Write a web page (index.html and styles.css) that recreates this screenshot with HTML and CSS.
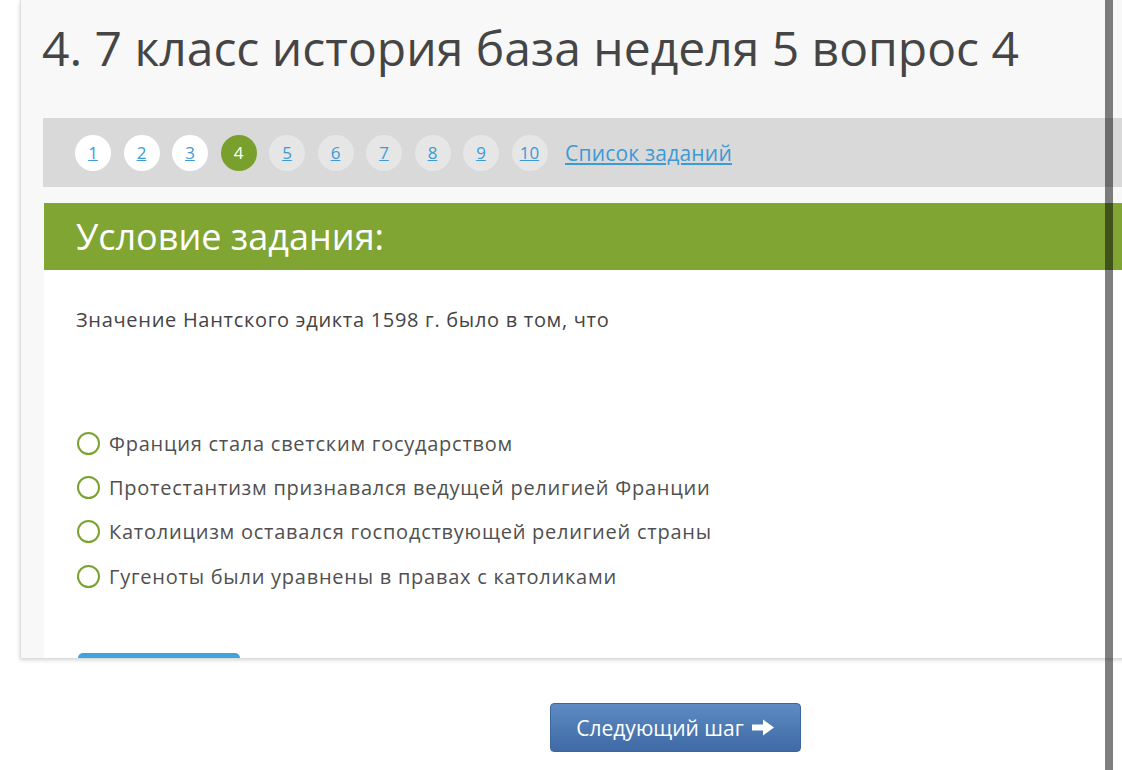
FILE: index.html
```html
<!DOCTYPE html>
<html lang="ru">
<head>
<meta charset="utf-8">
<title>4. 7 класс история база неделя 5 вопрос 4</title>
<link rel="stylesheet" href="styles.css">
</head>
<body>
<div class="page">
  <div class="card">
    <h1 class="title">4. 7 класс история база неделя 5 вопрос 4</h1>
    <nav class="steps">
      <a class="step done" href="#">1</a>
      <a class="step done" href="#">2</a>
      <a class="step done" href="#">3</a>
      <span class="step current">4</span>
      <a class="step" href="#">5</a>
      <a class="step" href="#">6</a>
      <a class="step" href="#">7</a>
      <a class="step" href="#">8</a>
      <a class="step" href="#">9</a>
      <a class="step" href="#">10</a>
      <a class="task-list" href="#">Список заданий</a>
    </nav>
    <section class="task">
      <h2 class="task-head">Условие задания:</h2>
      <div class="task-body">
        <p class="question">Значение Нантского эдикта 1598 г. было в том, что</p>
        <ul class="options">
          <li class="option"><span class="radio"></span>Франция стала светским государством</li>
          <li class="option"><span class="radio"></span>Протестантизм признавался ведущей религией Франции</li>
          <li class="option"><span class="radio"></span>Католицизм оставался господствующей религией страны</li>
          <li class="option"><span class="radio"></span>Гугеноты были уравнены в правах с католиками</li>
        </ul>
        <div class="answer-btn"></div>
      </div>
    </section>
  </div>
  <div class="footer">
    <button class="next-btn">Следующий шаг <svg class="arrow" width="24" height="17" viewBox="0 0 24 17"><path d="M1 5.5h11V0.5L23 8.5l-11 8V11.5H1z" fill="#fff"/></svg></button>
  </div>
</div>
<div class="divider"></div>
</body>
</html>
```
FILE: styles.css
```css
html, body {
  margin: 0;
  padding: 0;
  overflow: hidden;
  background: #ffffff;
  font-family: "Open Sans", "Noto Sans", sans-serif;
  color: #444444;
}
.page {
  width: 1122px;
  height: 770px;
  position: relative;
}
.card {
  margin-left: 20px;
  width: 1180px;
  height: 658px;
  box-sizing: border-box;
  background: #f8f8f8;
  border-left: 1px solid #dedede;
  box-shadow: 0 2px 4px rgba(0,0,0,0.18);
  padding-left: 22px;
  overflow: hidden;
  display: flex;
  flex-direction: column;
}
.title {
  margin: 16px 0 0 -1px;
  height: 102px;
  font-size: 48px;
  font-weight: 400;
  line-height: 64px;
  color: #454545;
}
.steps {
  height: 69px;
  background: #d9d9d9;
  display: flex;
  align-items: center;
  padding-left: 32px;
  gap: 12.5px;
}
.step {
  width: 36px;
  height: 36px;
  border-radius: 50%;
  background: #e6e6e6;
  display: flex;
  align-items: center;
  justify-content: center;
  font-size: 17px;
  color: #3d9ad6;
  text-decoration: underline;
}
.step.done { background: #ffffff; }
.step.current {
  background: #79a02c;
  color: #ffffff;
  text-decoration: none;
}
.task-list {
  margin-left: 5px;
  font-size: 21px;
  color: #3d9ad6;
  text-decoration: underline;
  letter-spacing: 0.2px;
}
.task {
  margin-top: 16px;
  margin-left: 1px;
  flex: 1;
  display: flex;
  flex-direction: column;
  background: #ffffff;
}
.task-head {
  margin: 0;
  height: 67px;
  background: #80a532;
  color: #ffffff;
  font-size: 36px;
  font-weight: 400;
  line-height: 67px;
  padding-left: 32px;
}
.task-body {
  flex: 1;
  padding-left: 32px;
  display: flex;
  flex-direction: column;
}
.question {
  margin: 38px 0 0;
  font-size: 20px;
  line-height: 24px;
  letter-spacing: 0.7px;
  color: #444444;
}
.options {
  list-style: none;
  margin: 89px 0 0;
  padding: 0;
  display: flex;
  flex-direction: column;
}
.option {
  display: flex;
  align-items: center;
  height: 44.3px;
  font-size: 20px;
  letter-spacing: 0.75px;
  color: #505050;
}
.radio {
  width: 19px;
  height: 19px;
  border: 2.5px solid #7aa22f;
  border-radius: 50%;
  margin: 0 9px 0 1px;
  flex: none;
}
.answer-btn {
  margin-top: auto;
  margin-left: 2px;
  width: 162px;
  height: 5px;
  background: #3fa3dc;
  border-radius: 12px 12px 0 0;
}
.footer {
  display: flex;
  justify-content: flex-start;
  padding: 45px 0 0 550px;
}
.next-btn {
  width: 251px;
  height: 49px;
  border: 1px solid #3c669e;
  border-radius: 4px;
  background: linear-gradient(#5e8bc3, #3f6aa5);
  color: #ffffff;
  font-family: "Open Sans", "Noto Sans", sans-serif;
  font-size: 21px;
  display: flex;
  align-items: center;
  justify-content: center;
  gap: 7px;
  padding: 0;
}
.arrow { display: block; }
.divider {
  position: absolute;
  left: 1105px;
  top: 0;
  width: 8px;
  height: 770px;
  background: rgba(0,0,0,0.5);
}
```
